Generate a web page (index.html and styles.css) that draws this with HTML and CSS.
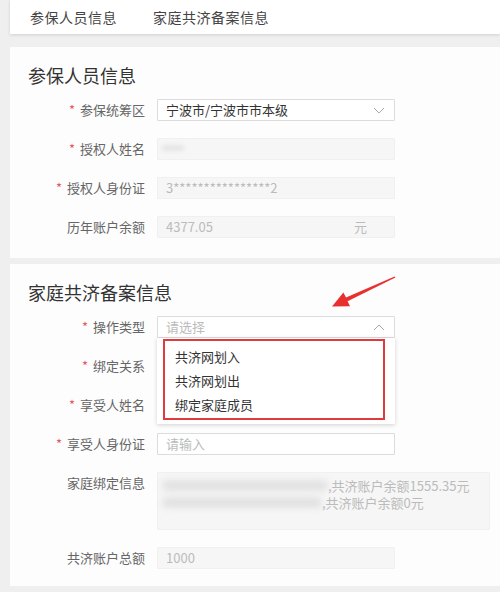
FILE: index.html
```html
<!DOCTYPE html>
<html lang="zh">
<head>
<meta charset="utf-8">
<link rel="stylesheet" href="styles.css">
</head>
<body>
<div class="page">
  <div class="tabs">
    <span class="tab">参保人员信息</span>
    <span class="tab">家庭共济备案信息</span>
  </div>

  <section class="card card-first">
    <h2 class="card-title">参保人员信息</h2>
    <div class="row">
      <label class="label"><i class="req">*</i>参保统筹区</label>
      <div class="field select">
        <span class="val">宁波市/宁波市市本级</span>
        <svg class="chev" width="12" height="7" viewBox="0 0 12 7"><polyline points="1,1 6,6 11,1" fill="none" stroke="#aaa" stroke-width="1"/></svg>
      </div>
    </div>
    <div class="row">
      <label class="label"><i class="req">*</i>授权人姓名</label>
      <div class="field disabled"><span class="smudge"></span></div>
    </div>
    <div class="row">
      <label class="label"><i class="req">*</i>授权人身份证</label>
      <div class="field disabled"><span class="dval">3****************2</span></div>
    </div>
    <div class="row">
      <label class="label">历年账户余额</label>
      <div class="field disabled"><span class="dval">4377.05</span><span class="unit">元</span></div>
    </div>
  </section>

  <section class="card card-second">
    <h2 class="card-title">家庭共济备案信息</h2>
    <div class="row">
      <label class="label"><i class="req">*</i>操作类型</label>
      <div class="field select open">
        <span class="ph">请选择</span>
        <svg class="chev" width="12" height="7" viewBox="0 0 12 7"><polyline points="1,6 6,1 11,6" fill="none" stroke="#aaa" stroke-width="1"/></svg>
        <div class="dropdown">
          <ul class="options">
            <li>共济网划入</li>
            <li>共济网划出</li>
            <li>绑定家庭成员</li>
          </ul>
        </div>
      </div>
    </div>
    <div class="row">
      <label class="label"><i class="req">*</i>绑定关系</label>
      <div class="field"></div>
    </div>
    <div class="row">
      <label class="label"><i class="req">*</i>享受人姓名</label>
      <div class="field"></div>
    </div>
    <div class="row">
      <label class="label"><i class="req">*</i>享受人身份证</label>
      <div class="field"><span class="ph">请输入</span></div>
    </div>
    <div class="row row-top">
      <label class="label">家庭绑定信息</label>
      <div class="field disabled textarea">
        <div class="tline"><span class="blur b1"></span><span class="tx">,共济账户余额1555.35元</span></div>
        <div class="tline"><span class="blur b2"></span><span class="tx">,共济账户余额0元</span></div>
      </div>
    </div>
    <div class="row">
      <label class="label">共济账户总额</label>
      <div class="field disabled"><span class="dval">1000</span></div>
    </div>
  </section>

  <svg class="arrow" width="500" height="592" viewBox="0 0 500 592">
    <polygon points="395.4,277.6 347.6,301.3 350,306.2 332,306.5 343.4,292.6 346,297.6 394.6,276.4" fill="#e8302f"/>
  </svg>
</div>
</body>
</html>
```

FILE: styles.css
```css
* { box-sizing: border-box; }
html, body { margin: 0; padding: 0; }
body {
  width: 500px;
  height: 592px;
  overflow: hidden;
  background: #efefef;
  font-family: "Noto Sans CJK SC", "Microsoft YaHei", sans-serif;
  color: #333;
}
.page {
  position: relative;
  padding-left: 10px;
  height: 592px;
}
.tabs {
  height: 34px;
  background: #fff;
  box-shadow: 0 1px 3px rgba(0,0,0,0.13);
  display: flex;
  align-items: center;
  gap: 36px;
  padding-left: 20px;
  font-size: 14px;
  letter-spacing: 0.5px;
  color: #444;
  position: relative;
  z-index: 1;
}
.card {
  background: #fdfdfd;
  padding: 18px 0 0 0;
}
.card-first { margin-top: 13px; height: 211px; }
.card-second { margin-top: 6px; height: 322px; }
.card-title {
  margin: 0 0 14px 18px;
  font-size: 18px;
  line-height: 20px;
  font-weight: normal;
  color: #333;
}
.row {
  display: flex;
  align-items: center;
  margin-bottom: 17px;
}
.row-top { align-items: flex-start; }
.label {
  width: 147px;
  padding-right: 12px;
  text-align: right;
  font-size: 13px;
  line-height: 22px;
  color: #666;
  flex: none;
}
.row-top .label { padding-top: 0; }
.req {
  font-style: normal;
  color: #e55a5e;
  margin-right: 5px;
}
.field {
  position: relative;
  width: 238px;
  height: 22px;
  border: 1px solid #dcdcdc;
  border-radius: 1px;
  background: #fff;
  font-size: 13px;
  line-height: 20px;
  padding: 0 8px;
  display: flex;
  align-items: center;
}
.field.disabled {
  background: #f6f6f6;
  border-color: #f0f0f0;
}
.val { color: #333; }
.ph { color: #bbb; }
.dval { color: #bbb; }
.unit {
  position: absolute;
  right: 27px;
  color: #bbb;
}
.chev {
  position: absolute;
  right: 9px;
  top: 7px;
}
.smudge {
  display: block;
  width: 22px;
  height: 6px;
  background: #e4e4e4;
  border-radius: 3px;
  filter: blur(2px);
  margin-left: -4px;
  margin-top: -2px;
}
.textarea {
  width: 333px;
  height: 58px;
  display: block;
  padding: 4px 8px;
  line-height: 17px;
}
.tline {
  display: flex;
  align-items: center;
  height: 17px;
}
.blur {
  display: block;
  height: 11px;
  background: #e2e2e2;
  border-radius: 6px;
  filter: blur(3px);
}
.b1 { width: 166px; margin-left: -4px; }
.b2 { width: 160px; margin-left: -4px; }
.tx { color: #bbb; font-size: 13px; white-space: nowrap; }
.tline:first-child .tx { margin-left: 0; }
.dropdown {
  position: absolute;
  left: -1px;
  top: 21px;
  width: 238px;
  height: 86px;
  background: #fff;
  box-shadow: 0 1px 4px rgba(0,0,0,0.18);
  padding: 1px 10px 0 6px;
  z-index: 5;
}
.options {
  list-style: none;
  margin: 0;
  padding: 4px 0 0 10px;
  border: 2px solid #df3b3e;
  height: 81px;
}
.options li {
  font-size: 13px;
  line-height: 24px;
  color: #333;
}
.arrow {
  position: absolute;
  left: 0;
  top: 0;
  z-index: 10;
  pointer-events: none;
}
```
